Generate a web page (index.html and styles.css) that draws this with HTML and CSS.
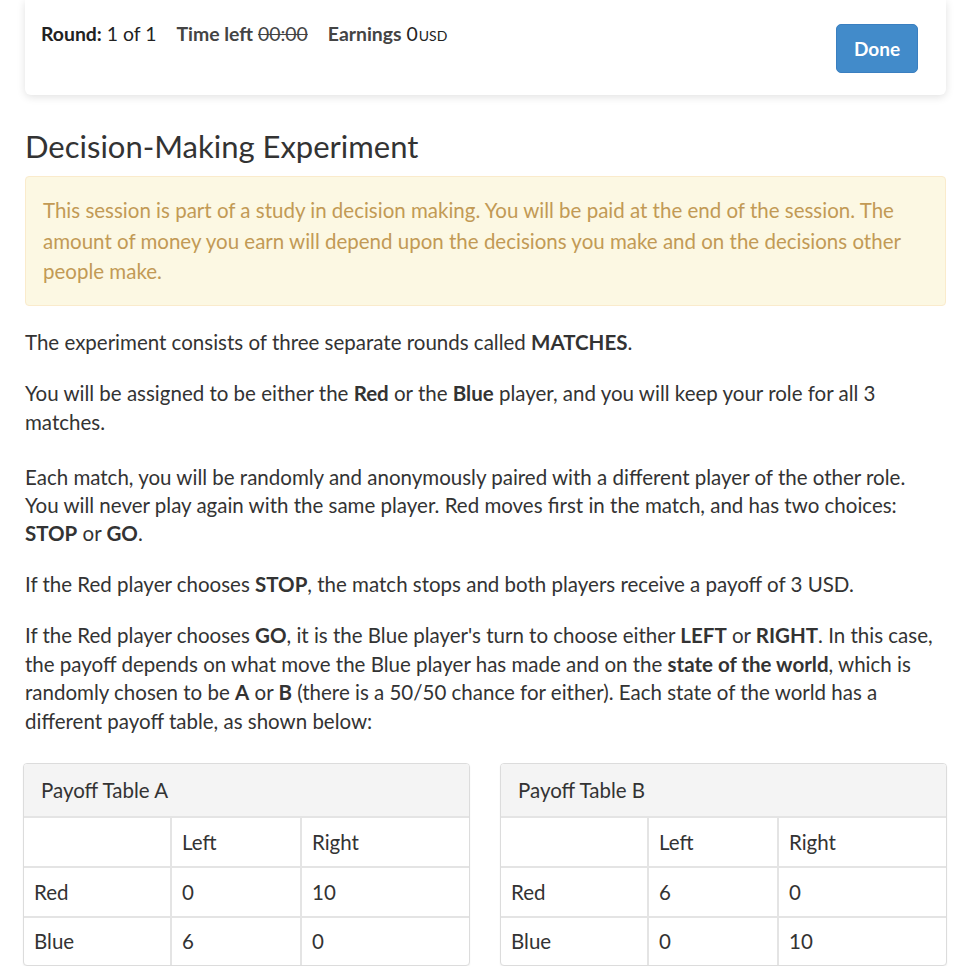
FILE: index.html
```html
<!DOCTYPE html>
<html>
<head>
<meta charset="utf-8">
<link rel="stylesheet" href="styles.css">
</head>
<body>
<div class="page">
  <div class="topbar">
    <div class="status">
      <span class="item"><b>Round:</b> 1 of 1</span>
      <span class="item"><b class="soft">Time left</b> <s>00:00</s></span>
      <span class="item"><b class="soft">Earnings</b> 0<span class="unit">USD</span></span>
    </div>
    <button class="btn">Done</button>
  </div>

  <h1 class="title">Decision-Making Experiment</h1>

  <div class="alert">This session is part of a study in decision making. You will be paid at the end of the session. The amount of money you earn will depend upon the decisions you make and on the decisions other people make.</div>

  <p>The experiment consists of three separate rounds called <b>MATCHES</b>.</p>
  <p>You will be assigned to be either the <b>Red</b> or the <b>Blue</b> player, and you will keep your role for all 3 matches.</p>
  <p class="spaced">Each match, you will be randomly and anonymously paired with a different player of the other role. You will never play again with the same player. Red moves first in the match, and has two choices: <b>STOP</b> or <b>GO</b>.</p>
  <p>If the Red player chooses <b>STOP</b>, the match stops and both players receive a payoff of 3 USD.</p>
  <p>If the Red player chooses <b>GO</b>, it is the Blue player's turn to choose either <b>LEFT</b> or <b>RIGHT</b>. In this case, the payoff depends on what move the Blue player has made and on the <b>state of the world</b>, which is randomly chosen to be <b>A</b> or <b>B</b> (there is a 50/50 chance for either). Each state of the world has a different payoff table, as shown below:</p>

  <div class="panels">
    <div class="panel">
      <div class="panel-head">Payoff Table A</div>
      <table class="payoff">
        <tr><td></td><td>Left</td><td>Right</td></tr>
        <tr><td>Red</td><td>0</td><td>10</td></tr>
        <tr><td>Blue</td><td>6</td><td>0</td></tr>
      </table>
    </div>
    <div class="panel">
      <div class="panel-head">Payoff Table B</div>
      <table class="payoff">
        <tr><td></td><td>Left</td><td>Right</td></tr>
        <tr><td>Red</td><td>6</td><td>0</td></tr>
        <tr><td>Blue</td><td>0</td><td>10</td></tr>
      </table>
    </div>
  </div>
</div>
</body>
</html>
```

FILE: styles.css
```css
html, body {
  margin: 0;
  padding: 0;
  background: #fff;
}
body {
  font-family: "Lato", "Open Sans", sans-serif;
  color: #333;
  font-size: 20.5px;
  line-height: 28.4px;
}
.page {
  width: 921px;
  margin-left: 25px;
}
.topbar {
  height: 95px;
  box-sizing: border-box;
  background: #fff;
  border-radius: 0 0 6px 6px;
  box-shadow: 0 2px 8px rgba(0,0,0,0.12);
  display: flex;
  justify-content: space-between;
  align-items: flex-start;
  padding: 20px 28px 0 16px;
}
.status {
  display: flex;
  gap: 20px;
  font-size: 19.4px;
  line-height: 28px;
  color: #222;
}
.status b { font-weight: 700; }
.status .soft { color: #444; }
.status s { color: #444; }
.unit { font-size: 14px; margin-left: 1px; }
.btn {
  margin-top: 4px;
  width: 82px;
  height: 49px;
  border: 1px solid #3a7fc0;
  border-radius: 5px;
  background: #428bca;
  color: #fff;
  font-family: "Lato", sans-serif;
  font-size: 19px;
  font-weight: 700;
  padding: 0;
}
.title {
  font-weight: 400;
  font-size: 31px;
  line-height: 40px;
  margin: 31px 0 10px;
  color: #333;
}
.alert {
  background: #fcf8e3;
  border: 1px solid #faebcc;
  border-radius: 4px;
  color: #c29a55;
  padding: 18px 17px 18px 17px;
  line-height: 30.5px;
}
p {
  margin: 22.6px 0 0;
  padding-right: 12px;
}
p.spaced {
  margin-top: 26.6px;
}
.panels {
  display: grid;
  grid-template-columns: 1fr 1fr;
  gap: 30px;
  margin: 28px -1px 0 -2px;
}
.panel {
  border: 1px solid #dcdcdc;
  border-radius: 4px;
  box-shadow: 0 1px 2px rgba(0,0,0,0.06);
  overflow: hidden;
  background: #fff;
}
.panel-head {
  background: #f4f4f4;
  height: 52px;
  line-height: 52px;
  padding-left: 17px;
}
.payoff {
  width: 100%;
  border-collapse: collapse;
}
.payoff td {
  height: 48px;
  padding: 0 10px;
  border-top: 2px solid #e4e4e4;
  border-left: 2px solid #e4e4e4;
  vertical-align: middle;
}
.payoff tr:last-child td { height: 47px; }
.payoff td:first-child { border-left: none; width: 126px; }
.payoff td:nth-child(2) { width: 108px; }
```
